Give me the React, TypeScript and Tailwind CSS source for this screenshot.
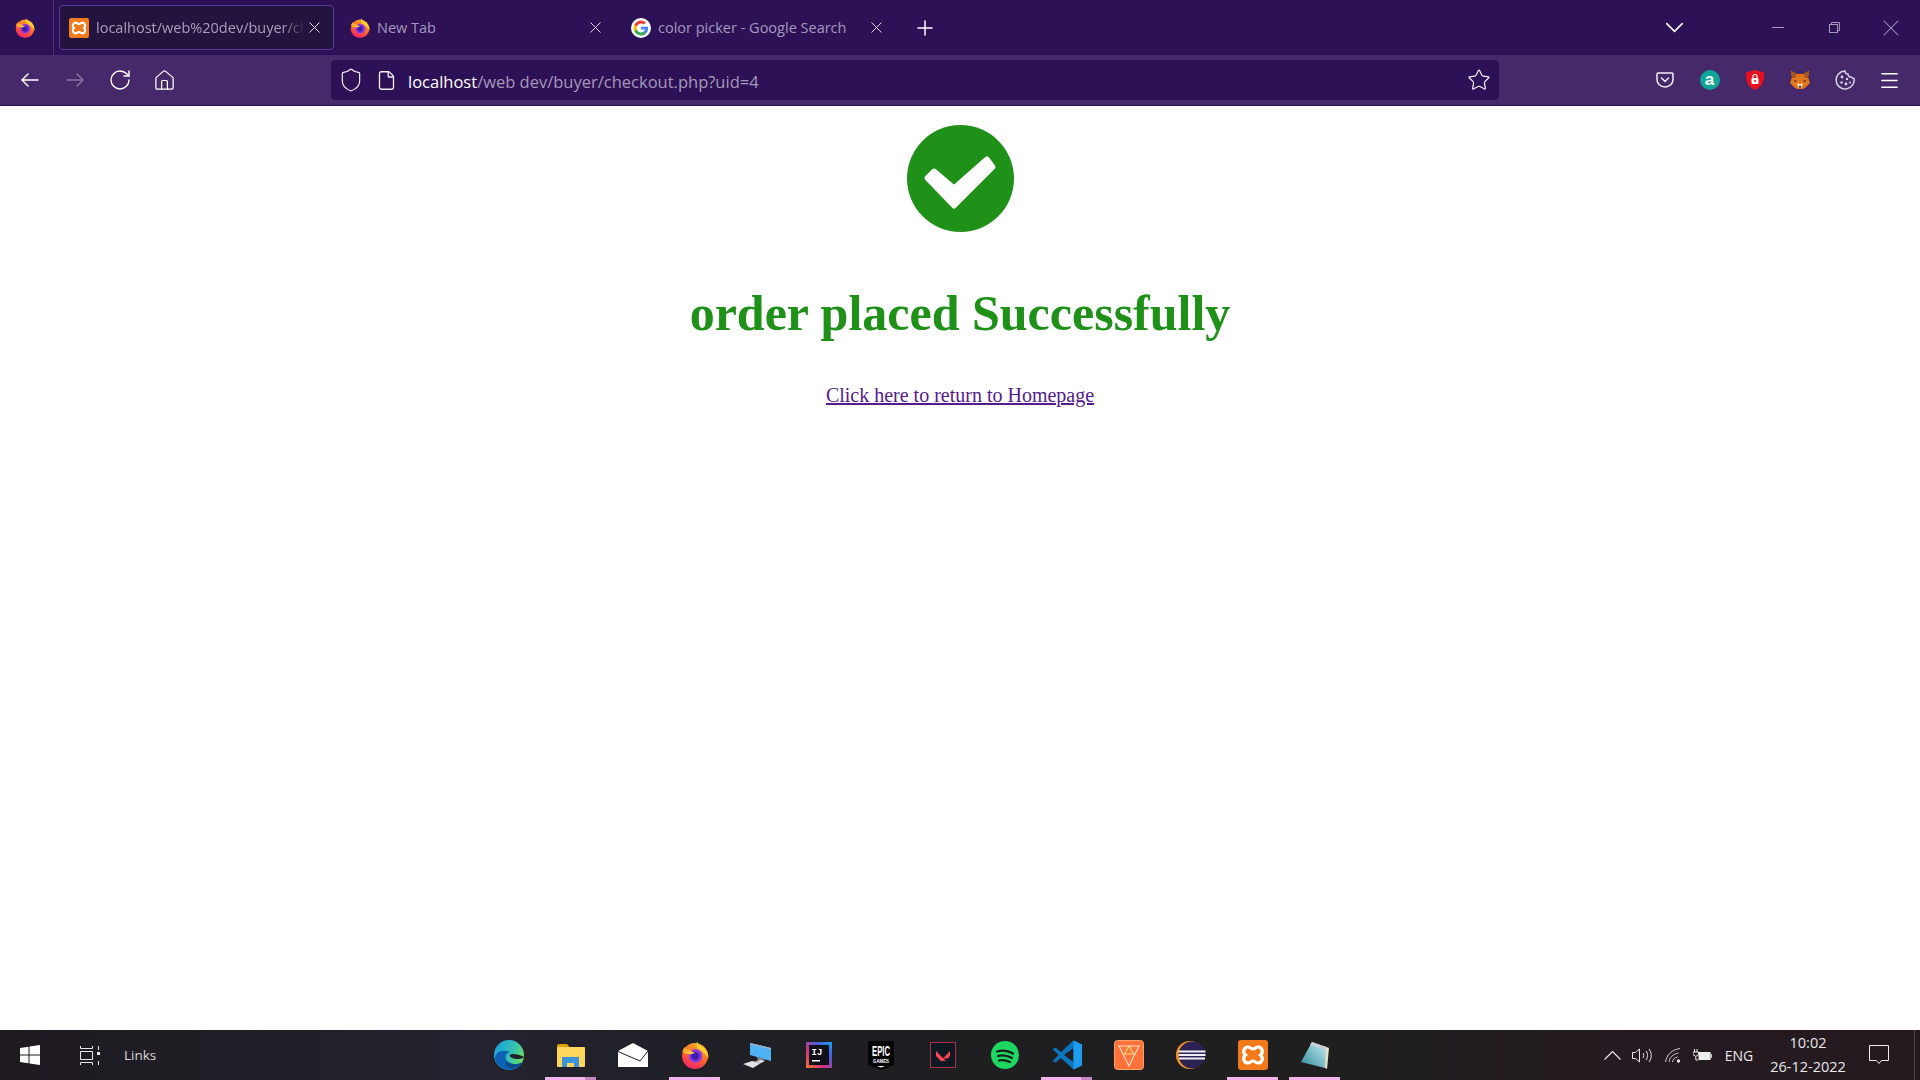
import { RotateCw, House, Shield, File, Star, Menu, X, Plus, ChevronDown } from "lucide-react";

function FirefoxLogo({ size = 20 }: { size?: number }) {
  return (
    <svg width={size} height={size} viewBox="0 0 28 28">
      <defs>
        <linearGradient id="ffBody" x1="0.8" y1="0" x2="0.3" y2="1">
          <stop offset="0" stopColor="#ffb92e" />
          <stop offset="0.5" stopColor="#ff6b24" />
          <stop offset="1" stopColor="#f21f6c" />
        </linearGradient>
        <radialGradient id="ffGlobe">
          <stop offset="0" stopColor="#5b2fd0" />
          <stop offset="0.55" stopColor="#6f35d8" />
          <stop offset="1" stopColor="#b13bd6" />
        </radialGradient>
      </defs>
      <circle cx="14" cy="15" r="13" fill="url(#ffBody)" />
      <path d="M16.500 0c-.5 3 2.500 4.500 6 6.500 3.500 2.500 5 6.500 5 11-2.500-4-5-6.500-9-8.500-3.500-2-4-6-2-9z" fill="#ffd02f" />
      <circle cx="14.500" cy="15" r="7" fill="url(#ffGlobe)" />
      <circle cx="14" cy="15" r="3.800" fill="#3e1ba8" />
      <path d="M1.500 10c.5-2 1.500-3 2.500-4 0 1 1 2 2 2 2 0 4 1 5 2.500-2 1-5 1-6 3-1-1-3-1-3.500-3.500z" fill="#ffa52b" />
      <path d="M5 11c3-1 7-.5 9 1-2 1-4 1.500-6 1-1.500 0-2.500-1-3-2z" fill="#ffcb3d" />
    </svg>
  );
}

function XamppLogo({ size = 20 }: { size?: number }) {
  return (
    <svg width={size} height={size} viewBox="0 0 30 30">
      <rect width="30" height="30" rx="3" fill="#f27a1a" />
      <path d="M10 7c2 0 3 2 5 2s3-2 5-2c4 0 6 5 2.500 8 3.500 3 1.500 8-2.500 8-2 0-3-2-5-2s-3 2-5 2c-4 0-6-5-2.500-8C4 12 6 7 10 7z" fill="none" stroke="#fff" strokeWidth="3.200" />
    </svg>
  );
}

function GoogleLogo() {
  return (
    <svg width="20" height="20" viewBox="0 0 24 24">
      <circle cx="12" cy="12" r="12" fill="#fff" />
      <path d="M20.600 12.200c0-.6 0-1.200-.2-1.700H12v3.300h4.800c-.2 1.100-.8 2-1.800 2.600v2.200h2.900c1.700-1.600 2.700-3.800 2.700-6.400z" fill="#4285f4" />
      <path d="M12 21c2.400 0 4.400-.8 5.900-2.200L15 16.500c-.8.500-1.800.9-3 .9-2.300 0-4.300-1.600-5-3.700H4v2.300C5.500 19 8.500 21 12 21z" fill="#34a853" />
      <path d="M7 13.700c-.4-1.100-.4-2.300 0-3.400V8H4c-1.300 2.500-1.300 5.500 0 8z" fill="#fbbc05" />
      <path d="M12 6.600c1.300 0 2.500.5 3.400 1.300L18 5.400C16.400 3.900 14.400 3 12 3 8.500 3 5.500 5 4 8l3 2.300c.7-2.100 2.700-3.700 5-3.700z" fill="#ea4335" />
    </svg>
  );
}

function Tab({ icon, title, active }: { icon: React.ReactNode; title: string; active?: boolean }) {
  return (
    <div
      className={`flex h-[45px] w-[275px] shrink-0 items-center rounded-[4px] border pl-[9px] pr-[9px] ${
        active ? "border-[#5b3a9e] bg-[#23133f]" : "border-transparent"
      }`}
    >
      <div className="flex w-[20px] shrink-0 justify-center">{icon}</div>
      <span
        className={`ml-[7px] min-w-0 flex-1 overflow-hidden whitespace-nowrap pt-[1px] text-[14.5px] ${
          active ? "text-[#a89fb6] [mask-image:linear-gradient(90deg,#000_90%,transparent)]" : "text-[#a499bb]"
        }`}
      >
        {title}
      </span>
      <X className="shrink-0 text-[#e8e4ee]" size={19} strokeWidth={1.2} />
    </div>
  );
}

function ToolButton({ children }: { children: React.ReactNode }) {
  return <div className="flex h-[40px] w-[45px] shrink-0 items-center justify-center">{children}</div>;
}

function NavArrow({ back, dim }: { back?: boolean; dim?: boolean }) {
  return (
    <svg width="18" height="14" viewBox="0 0 18 14" fill="none" stroke={dim ? "#8675a0" : "#fff"} strokeWidth="1.500" strokeLinecap="round">
      {back ? <path d="M1 7h16M7 1 1 7l6 6" /> : <path d="M1 7h16M11 1l6 6-6 6" />}
    </svg>
  );
}

function PocketIcon() {
  return (
    <svg width="18" height="16" viewBox="0 0 18 16" fill="none" stroke="#f2f0f5" strokeWidth="1.500">
      <path d="M2 1h14c.6 0 1 .4 1 1v5.500a8 7.500 0 0 1-16 0V2c0-.6.4-1 1-1z" />
      <path d="M5.500 6 9 9.500 12.500 6" strokeLinecap="round" />
    </svg>
  );
}

function RedShield() {
  return (
    <svg width="18" height="20" viewBox="0 0 18 20">
      <path d="M9 0l9 2.500c0 8 0 13-9 17.500C0 15.500 0 10.500 0 2.500z" fill="#e8101e" />
      <rect x="5.500" y="8" width="7" height="6" rx="1" fill="#fff" />
      <path d="M7 8V6.500a2 2 0 0 1 4 0V8" fill="none" stroke="#fff" strokeWidth="1.200" />
      <circle cx="9" cy="11" r="1" fill="#e8101e" />
    </svg>
  );
}

function FoxIcon() {
  return (
    <svg width="20" height="18" viewBox="0 0 20 18">
      <path d="M1 0l6 3h6l6-3-1 6 2 6-4 4-3 2H7l-3-2-4-4 2-6z" fill="#e2761b" />
      <path d="M1 0l6 3-2 4H2zM19 0l-6 3 2 4h3z" fill="#a9561c" />
      <path d="M7 12l3 1 3-1-1 4-2 1-2-1z" fill="#f4d9bd" />
      <path d="M4 9l3 1-2 1zM16 9l-3 1 2 1z" fill="#33210f" />
      <path d="M9 15h2v1.500H9z" fill="#1e1a17" />
    </svg>
  );
}

function CookieIcon() {
  return (
    <svg width="20" height="20" viewBox="0 0 20 20" fill="none" stroke="#d8d3e0" strokeWidth="1.500">
      <path d="M10 1c0 2 1.500 3 3 3 0 2 1.500 3.500 3.500 3 .5 1 2 1.500 2.500 1.500A9 9 0 1 1 10 1z" />
      <g fill="#d8d3e0" stroke="none">
        <circle cx="7" cy="7" r="1.400" />
        <circle cx="12" cy="9" r="1.200" />
        <circle cx="6.500" cy="12.500" r="1.200" />
        <circle cx="11" cy="14" r="1.400" />
        <circle cx="15" cy="12.500" r="1" />
      </g>
    </svg>
  );
}

function AmazonBadge() {
  return (
    <div className="flex h-[20px] w-[20px] items-center justify-center rounded-full bg-[#0ea596] pb-[2px] font-['Liberation_Sans',sans-serif] text-[17px] font-bold leading-none text-white">
      a
    </div>
  );
}

function WindowsLogo() {
  return (
    <svg width="20" height="20" viewBox="0 0 20 20" fill="#fff">
      <path d="M0 3l8.500-1.200V9.500H0zM9.500 1.600 20 0v9.500H9.500zM0 10.500h8.500v7.700L0 17zM9.500 10.500H20V20L9.500 18.400z" />
    </svg>
  );
}

function TaskViewIcon() {
  return (
    <svg width="20" height="19" viewBox="0 0 20 19" fill="none" stroke="#e8e8e8" strokeWidth="1">
      <path d="M.5 0v2.500h12V0M.5 5.500h12v8H.5zM.5 19v-2.500h12V19" />
      <path d="M18.500 0v4M18.500 15v4" />
      <rect x="17" y="6" width="3" height="3" fill="#e8e8e8" stroke="none" />
    </svg>
  );
}

function EdgeLogo() {
  return (
    <svg width="30" height="30" viewBox="0 0 30 30">
      <defs>
        <linearGradient id="edgeTop" x1="0" y1="0.2" x2="1" y2="0.6">
          <stop offset="0" stopColor="#1a9fe0" />
          <stop offset="0.6" stopColor="#35c1b0" />
          <stop offset="1" stopColor="#6fdc5e" />
        </linearGradient>
      </defs>
      <circle cx="15" cy="15" r="15" fill="url(#edgeTop)" />
      <path d="M1 19c2 7 8 11 14 11s11-3 14-8c-5 3-13 3-16-1-3-4-1-8 3-9C9 9 1 11 1 19z" fill="#0b62b5" />
      <path d="M13 21c3 4 11 4 16 1-1.500 3-7 7-12 6.500-4-.5-7-4-4-7.500z" fill="#0e4a8c" />
      <path d="M30 17c-5-3-13-4-14-2s3 4 8 4c3 0 5-1 6-2z" fill="#201f2a" />
    </svg>
  );
}

function FolderLogo() {
  return (
    <svg width="28" height="23" viewBox="0 0 28 23">
      <path d="M0 2a2 2 0 0 1 2-2h8l3 3.500H0z" fill="#e0a000" />
      <rect y="3" width="28" height="20" rx="1" fill="#ffd65c" />
      <path d="M5 23V13h17v10h-5v-4h-7v4z" fill="#3d93d8" />
    </svg>
  );
}

function MailLogo() {
  return (
    <svg width="30" height="24" viewBox="0 0 30 24">
      <path d="M15 0 30 8v16H0V8z" fill="#fff" />
      <path d="M0 8.500 22 18l8-10" fill="none" stroke="#1f1f27" strokeWidth="1" />
    </svg>
  );
}

function PcLogo() {
  return (
    <svg width="28" height="25" viewBox="0 0 28 25">
      <path d="M7 0l21 5v13L7 12z" fill="#4db3f4" />
      <path d="M7 0l21 5v1.500L7 1.500z" fill="#9db6c6" />
      <path d="M14 14l8 2-2 2-5-1z" fill="#7f8a92" />
      <path d="M0 21l9-3 9 2-8 5zM12 18l6-1 4 1-4 2z" fill="#dfe3e6" />
    </svg>
  );
}

function IdeaLogo() {
  return (
    <svg width="26" height="26" viewBox="0 0 26 26">
      <defs>
        <linearGradient id="ijEdge" x1="0" y1="1" x2="1" y2="0">
          <stop offset="0" stopColor="#f0782a" />
          <stop offset="0.35" stopColor="#d6307f" />
          <stop offset="0.7" stopColor="#4a5fe0" />
          <stop offset="1" stopColor="#10a6f0" />
        </linearGradient>
      </defs>
      <rect width="26" height="26" fill="url(#ijEdge)" />
      <rect x="3" y="3" width="20" height="20" fill="#101018" />
      <text x="5.500" y="13" fill="#fff" fontSize="9" fontWeight="700" fontFamily="'Liberation Mono', monospace">IJ</text>
      <rect x="6" y="18" width="8" height="1.500" fill="#fff" />
    </svg>
  );
}

function EpicLogo() {
  return (
    <svg width="26" height="29" viewBox="0 0 26 29">
      <path d="M2 0h22a2 2 0 0 1 2 2v22l-13 5-13-5V2a2 2 0 0 1 2-2z" fill="#050505" />
      <text x="4" y="15" fill="#fff" fontSize="15" fontWeight="700" fontFamily="'Liberation Sans', sans-serif" textLength="18" lengthAdjust="spacingAndGlyphs">EPIC</text>
      <text x="5" y="22" fill="#fff" fontSize="5" fontWeight="700" fontFamily="'Liberation Sans', sans-serif" textLength="16" lengthAdjust="spacingAndGlyphs">GAMES</text>
      <path d="M9 25h8l-4 1.500z" fill="#fff" />
    </svg>
  );
}

function ValorantLogo() {
  return (
    <svg width="26" height="26" viewBox="0 0 26 26">
      <rect x=".5" y=".5" width="25" height="25" fill="#0f1923" stroke="#a53246" />
      <path d="M6 9l10 10h-5l-5-5zM20 9v5l-2.500 2.500H13z" fill="#ff4655" />
    </svg>
  );
}

function SpotifyLogo() {
  return (
    <svg width="28" height="28" viewBox="0 0 28 28" fill="none">
      <circle cx="14" cy="14" r="14" fill="#1ed760" />
      <path d="M6 10.500c5-1.500 11-1 16 2M7 15c4-1 9-.6 14 2M8 19.500c3-.8 7-.4 11 1.500" stroke="#1c1c1c" strokeWidth="2.200" strokeLinecap="round" />
    </svg>
  );
}

function VscodeLogo() {
  return (
    <svg width="30" height="30" viewBox="0 0 30 30">
      <path fillRule="evenodd" d="M21.500.5 9 12 3.500 7.500.5 9l6 6-6 6 3 1.500L9 18l12.500 11.500L30 25.500v-21zM21.500 8 12 15l9.500 7z" fill="#0a74bd" />
      <path d="M21.500.5 30 4.500v21l-8.500 4z" fill="#1f9cf0" />
    </svg>
  );
}

function FmanLogo() {
  return (
    <svg width="30" height="30" viewBox="0 0 30 30">
      <rect x=".5" y=".5" width="29" height="29" rx="3" fill="#ff7239" stroke="#f7a46a" />
      <path d="M5 6h20L15 26z" fill="none" stroke="#ffdcc8" strokeWidth="1.200" />
      <path d="M15 6l-4.500 8h9z" fill="none" stroke="#ffe27a" strokeWidth="1.200" />
    </svg>
  );
}

function EclipseLogo() {
  return (
    <svg width="30" height="28" viewBox="0 0 30 28">
      <circle cx="14" cy="14" r="14" fill="#f7941e" />
      <circle cx="16" cy="14" r="13.500" fill="#2c2255" />
      <path d="M2.500 9.500h27v2h-27zM2.500 13h27v2h-27zM3 16.500h26v2H3z" fill="#f2eff7" />
    </svg>
  );
}

function NotepadLogo() {
  return (
    <svg width="28" height="27" viewBox="0 0 28 27">
      <defs>
        <linearGradient id="npBody" x1="0" y1="1" x2="1" y2="0">
          <stop offset="0" stopColor="#2f8a9c" />
          <stop offset="1" stopColor="#c4ecf2" />
        </linearGradient>
      </defs>
      <path d="M23 4l5 2-2 21-4-2z" fill="#e8e2c8" />
      <path d="M11 0l14 5-1 21L0 20z" fill="url(#npBody)" />
      <path d="M11 0l14 5-1 3-15-5z" fill="#c8d0d3" />
    </svg>
  );
}

function VolumeIcon() {
  return (
    <svg width="20" height="15" viewBox="0 0 20 15" fill="none" stroke="#e8e8e8" strokeWidth="1">
      <path d="M.5 4.500h3L7.500 1v13l-4-3.500h-3z" />
      <path d="M11 5c1 1.500 1 3.500 0 5M14 3c2 2.500 2 6.500 0 9M17 1c3 4 3 9 0 13" />
    </svg>
  );
}

function WifiIcon() {
  return (
    <svg width="16" height="15" viewBox="0 0 16 15" fill="none" stroke="#cfcccf" strokeWidth="1">
      <path d="M.5 14C1.500 7 7 1.500 15 .5M4 14c.5-4.500 4-8 9.500-9M7.500 14c.3-2.500 2-4.500 5-5" />
      <circle cx="13.500" cy="13" r="1.700" fill="#e8e8e8" stroke="none" />
    </svg>
  );
}

function BatteryIcon() {
  return (
    <svg width="19" height="12" viewBox="0 0 19 12">
      <path d="M1.500 0v3M4 0v3M0 3h5.500v2.500L2.800 7.500 0 5.500zM2.800 7.500V11H5" fill="none" stroke="#eee" strokeWidth="1" />
      <rect x="5.500" y="3" width="12" height="8" fill="#eee" />
      <rect x="17.500" y="5" width="1.500" height="4" fill="#ccc" />
    </svg>
  );
}

const taskbarApps = [
  { key: "edge", icon: <EdgeLogo /> },
  { key: "folder", icon: <FolderLogo />, bar: true, stacked: true },
  { key: "mail", icon: <MailLogo /> },
  { key: "firefox", icon: <FirefoxLogo size={28} />, bar: true },
  { key: "pc", icon: <PcLogo /> },
  { key: "idea", icon: <IdeaLogo /> },
  { key: "epic", icon: <EpicLogo /> },
  { key: "valorant", icon: <ValorantLogo /> },
  { key: "spotify", icon: <SpotifyLogo /> },
  { key: "vscode", icon: <VscodeLogo />, bar: true, stacked: true },
  { key: "fman", icon: <FmanLogo /> },
  { key: "eclipse", icon: <EclipseLogo /> },
  { key: "xampp", icon: <XamppLogo size={30} />, bar: true },
  { key: "notepad", icon: <NotepadLogo />, bar: true },
];

export default function App() {
  return (
    <div className="flex h-[1080px] w-[1920px] flex-col overflow-hidden bg-white font-['Open_Sans',sans-serif]">
      <div className="flex h-[55px] shrink-0 items-stretch bg-[#2d1157]">
        <div className="flex w-[54px] shrink-0 items-center justify-center border-r border-[#4b3473] pr-[3px]">
          <FirefoxLogo />
        </div>
        <div className="ml-[5px] flex items-start gap-[6px] pt-[5px]">
          <Tab active icon={<XamppLogo />} title="localhost/web%20dev/buyer/ch" />
          <Tab icon={<FirefoxLogo />} title="New Tab" />
          <Tab icon={<GoogleLogo />} title="color picker - Google Search" />
        </div>
        <div className="flex w-[58px] items-center justify-center">
          <Plus className="text-white" size={24} strokeWidth={1.5} />
        </div>
        <div className="ml-auto flex items-center text-[#a699b8]">
          <div className="mr-[56px] flex w-[40px] justify-center">
            <ChevronDown className="text-white" size={31} strokeWidth={1.2} />
          </div>
          <div className="flex w-[56px] justify-center">
            <div className="h-px w-[12px] bg-[#a699b8]" />
          </div>
          <div className="flex w-[56px] justify-center">
            <svg width="11" height="11" viewBox="0 0 11 11" fill="none" stroke="currentColor">
              <rect x=".5" y="2.500" width="8" height="8" />
              <path d="M2.500 2.500v-2h8v8h-2" />
            </svg>
          </div>
          <div className="flex w-[58px] justify-center">
            <X size={28} strokeWidth={0.9} />
          </div>
        </div>
      </div>

      <div className="flex h-[51px] shrink-0 items-center border-b border-[#2d1157] bg-[#45296b] pl-[7px] pr-[7px]">
        <ToolButton><NavArrow back /></ToolButton>
        <ToolButton><NavArrow dim /></ToolButton>
        <ToolButton><RotateCw className="text-white" size={24} strokeWidth={1.4} /></ToolButton>
        <ToolButton><House className="text-white" size={23} strokeWidth={1.3} /></ToolButton>
        <div className="ml-[144px] flex h-[40px] w-[1168px] shrink-0 items-center rounded-[4px] bg-[#2d1157] pl-[7px] pr-[8px] text-[#f2f0f5]">
          <Shield size={26} strokeWidth={1.1} />
          <File className="ml-[12px]" size={21} strokeWidth={1.5} />
          <span className="ml-[11px] flex-1 whitespace-nowrap pt-[4px] text-[16.5px] text-[#a699b8]">
            <span className="text-white">localhost</span>/web dev/buyer/checkout.php?uid=4
          </span>
          <Star size={24} strokeWidth={1.2} />
        </div>
        <div className="ml-[143px] flex items-center">
          <ToolButton><PocketIcon /></ToolButton>
          <ToolButton><AmazonBadge /></ToolButton>
          <ToolButton><RedShield /></ToolButton>
          <ToolButton><FoxIcon /></ToolButton>
          <ToolButton><CookieIcon /></ToolButton>
          <ToolButton><Menu className="text-white" size={23} strokeWidth={1.5} /></ToolButton>
        </div>
      </div>

      <main className="flex flex-1 flex-col items-center bg-white font-['Liberation_Serif',serif]">
        <svg className="mt-[19px]" width="107" height="107" viewBox="0 0 107 107">
          <circle cx="53.500" cy="53.500" r="53.500" fill="#1f9119" />
          <path d="M20 53l7-7 20 17 33-29 6 8-39 39z" fill="#fff" stroke="#fff" strokeWidth="5" strokeLinejoin="round" />
        </svg>
        <h1 className="mt-[53px] text-[50px] font-bold leading-[57px] text-[#1f9119]">order placed Successfully</h1>
        <a href="#" className="mt-[42px] text-[20px] leading-[23px] text-[#551a8b] underline">
          Click here to return to Homepage
        </a>
      </main>

      <div className="flex h-[50px] shrink-0 items-center bg-[linear-gradient(90deg,#1f1a20_0%,#23222e_25%,#1f1f24_40%,#1f1f1f_70%,#251a21_85%,#241a20_100%)] text-[#e8e8e8]">
        <div className="flex w-[478px] shrink-0 items-center">
          <div className="flex w-[60px] shrink-0 justify-center"><WindowsLogo /></div>
          <div className="flex w-[60px] shrink-0 justify-center"><TaskViewIcon /></div>
          <span className="ml-[4px] text-[13.5px] text-[#d8d8d8]">Links</span>
        </div>
        <div className="flex h-full">
          {taskbarApps.map((app) => (
            <div key={app.key} className="relative flex h-full w-[62px] shrink-0 items-center justify-center">
              {app.icon}
              {app.bar && (
                <div className={`absolute bottom-0 left-[5px] h-[3px] w-[51px] ${app.stacked ? "bg-[linear-gradient(90deg,#f3b4ec_78%,#c587bd_78%)]" : "bg-[#f3b4ec]"}`} />
              )}
            </div>
          ))}
        </div>
        <div className="ml-auto flex h-full items-center">
          <div className="flex w-[30px] justify-center">
            <svg width="17" height="9" viewBox="0 0 17 9" fill="none" stroke="#e8e8e8" strokeWidth="1.200">
              <path d="M.5 8.500l8-8 8 8" />
            </svg>
          </div>
          <div className="flex w-[30px] justify-center"><VolumeIcon /></div>
          <div className="flex w-[31px] justify-center"><WifiIcon /></div>
          <div className="flex w-[28px] justify-center"><BatteryIcon /></div>
          <span className="w-[46px] text-center text-[14px]">ENG</span>
          <div className="flex w-[92px] flex-col items-center text-[14.5px] leading-[24px]">
            <span>10:02</span>
            <span>26-12-2022</span>
          </div>
          <div className="flex w-[50px] justify-center">
            <svg width="20" height="20" viewBox="0 0 20 20" fill="none" stroke="#eee">
              <path d="M.5 .5h19v15h-7l-2.500 3-2.500-3h-7z" />
            </svg>
          </div>
          <div className="ml-[10px] mr-[5px] h-full w-px bg-[#4a4448]" />
        </div>
      </div>
    </div>
  );
}
